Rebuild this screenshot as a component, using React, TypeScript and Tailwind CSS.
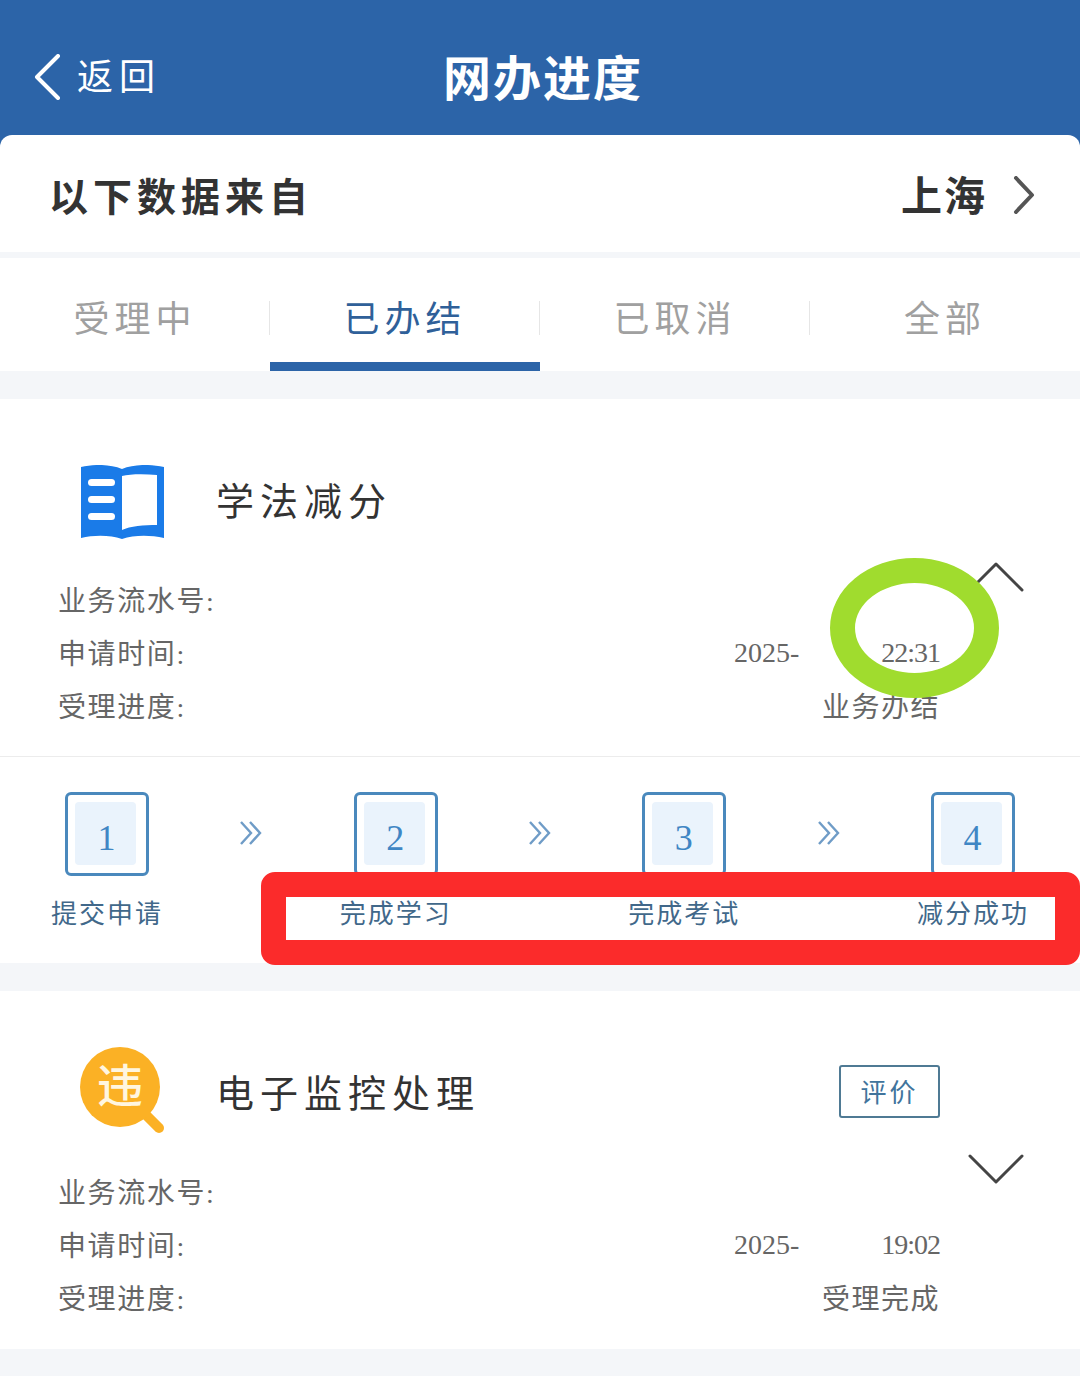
import { ReactNode } from "react";

function BackChevron() {
  return (
    <svg width="28" height="46" viewBox="0 0 28 46" fill="none" className="-mt-[6px] shrink-0">
      <path d="M25 2 L4 23 L25 44" stroke="#fff" strokeWidth="4" strokeLinecap="round" strokeLinejoin="round" />
    </svg>
  );
}

function RightChevron() {
  return (
    <svg width="22" height="38" viewBox="0 0 22 38" fill="none" className="-mt-[6px] shrink-0">
      <path d="M3 2 L19 19 L3 36" stroke="#555" strokeWidth="4" strokeLinecap="round" strokeLinejoin="round" />
    </svg>
  );
}

function BookIcon() {
  return (
    <svg width="85" height="74" viewBox="0 0 85 74" className="shrink-0">
      <path d="M1 2 C14 -1 30 -1 42 4 C54 -1 70 -1 84 2 L84 73 C70 70 54 70 42 74 C30 70 14 70 1 73 Z" fill="#1a7be8" />
      <path d="M42 11 C50 9 64 9 77 10 L77 60 C64 60 50 61 42 65 Z" fill="#fff" />
      <rect x="8" y="14" width="27" height="7" rx="3.5" fill="#fff" />
      <rect x="8" y="31" width="27" height="7" rx="3.5" fill="#fff" />
      <rect x="8" y="48" width="27" height="7" rx="3.5" fill="#fff" />
    </svg>
  );
}

function ViolationIcon() {
  return (
    <div className="relative -mt-[8px] h-[86px] w-[85px] shrink-0">
      <svg width="85" height="86" viewBox="0 0 85 86" className="absolute left-0 top-0">
        <path d="M64 66 L79 81" stroke="#fbb125" strokeWidth="10" strokeLinecap="round" />
        <circle cx="40" cy="40" r="40" fill="#fbb125" />
      </svg>
      <span className="absolute left-[17px] top-[10px] text-[46px] leading-[60px] font-medium text-[#fff6e0]">违</span>
    </div>
  );
}

function Toggle({ up }: { up: boolean }) {
  return (
    <svg width="56" height="32" viewBox="0 0 56 32" fill="none">
      <path
        d={up ? "M2 29 L28 3 L54 29" : "M2 3 L28 29 L54 3"}
        stroke="#444"
        strokeWidth="3"
        strokeLinecap="round"
        strokeLinejoin="round"
      />
    </svg>
  );
}

function DoubleChevron() {
  return (
    <svg width="26" height="26" viewBox="0 0 26 26" fill="none" className="mt-[28px] shrink-0">
      <path d="M3 2 L13 13 L3 24 M12 2 L22 13 L12 24" stroke="#6f9cc7" strokeWidth="2.4" />
    </svg>
  );
}

function InfoRow({ label, children }: { label: string; children: ReactNode }) {
  return (
    <div className="flex h-[53px] items-center justify-between text-[28px] leading-none text-[#666]">
      <span className="tracking-[1.6px]">{label}</span>
      {children}
    </div>
  );
}

function Step({ num, label }: { num: number; label: string }) {
  return (
    <div className="flex w-[110px] flex-col items-center">
      <div className="h-[84px] w-[84px] rounded-[6px] border-[3px] border-[#4a89bd] bg-white pl-[7px] pt-[7px]">
        <div className="flex h-[63px] w-[61px] items-center justify-center rounded-[4px] bg-[#eaf3fc] pl-[2px] pt-[8px] text-[36px] leading-none text-[#3f86c4]">
          {num}
        </div>
      </div>
      <span className="mt-[22px] whitespace-nowrap text-[26px] leading-[34px] tracking-[2px] text-[#41688a]">{label}</span>
    </div>
  );
}

function CardBody({
  icon,
  title,
  action,
  up,
  serial,
  date,
  status,
}: {
  icon: ReactNode;
  title: string;
  action?: ReactNode;
  up: boolean;
  serial: string;
  date: ReactNode;
  status: string;
}) {
  return (
    <div className="flex">
      <div className="flex-1 pb-[22px] pl-[58px]">
        <div className="mb-[30px] mt-[60px] flex h-[86px] items-center pl-[22px]">
          {icon}
          <span className="ml-[51px] text-[38px] leading-none tracking-[6px] text-[#333]">{title}</span>
          {action}
        </div>
        <InfoRow label={serial}>
          <span />
        </InfoRow>
        <InfoRow label="申请时间:">{date}</InfoRow>
        <InfoRow label="受理进度:">
          <span className="tracking-[1.5px]">{status}</span>
        </InfoRow>
      </div>
      <div className="w-[140px] pl-[28px] pt-[162px]">
        <Toggle up={up} />
      </div>
    </div>
  );
}

export default function App() {
  const tabs = ["受理中", "已办结", "已取消", "全部"];

  return (
    <div className="h-[1387px] w-[1080px] overflow-hidden bg-white font-['Liberation_Serif','Noto_Sans_CJK_SC',serif]">
      {/* Header */}
      <div className="grid h-[135px] grid-cols-[1fr_auto_1fr] items-center bg-[#2c64a8] pt-[24px] text-white">
        <div className="flex items-center gap-[16px] pl-[33px]">
          <BackChevron />
          <span className="-mt-[4px] text-[36px] leading-none tracking-[6px]">返回</span>
        </div>
        <span className="ml-[6px] text-[48px] font-bold leading-none tracking-[2px]">网办进度</span>
        <div />
      </div>

      <div className="bg-[#f4f6f9]">
        {/* Region */}
        <div className="bg-[#2c64a8]">
          <div className="flex h-[117px] items-center justify-between rounded-t-[12px] bg-white pl-[49px] pr-[45px] pt-[8px]">
            <span className="text-[39px] font-bold leading-none tracking-[5px] text-[#333]">以下数据来自</span>
            <div className="flex items-center gap-[26px]">
              <span className="text-[41px] font-bold leading-none tracking-[2px] text-[#333]">上海</span>
              <RightChevron />
            </div>
          </div>
        </div>

        {/* Tabs */}
        <div className="mt-[6px] grid h-[113px] grid-cols-4 bg-white">
          {tabs.map((tab, i) => (
            <div key={tab} className="relative flex items-center justify-center pt-[10px]">
              <span
                className={
                  i === 1
                    ? "text-[36px] leading-none tracking-[5px] text-[#2f6099]"
                    : "text-[36px] leading-none tracking-[5px] text-[#a0a0a0]"
                }
              >
                {tab}
              </span>
              {i < 3 && <div className="absolute bottom-[36px] right-0 h-[34px] w-px bg-[#e6e6e6]" />}
              {i === 1 && <div className="absolute bottom-0 left-0 right-0 h-[9px] bg-[#2c64a8]" />}
            </div>
          ))}
        </div>

        {/* 学法减分 */}
        <div className="relative mt-[28px] bg-white">
          <CardBody
            icon={<BookIcon />}
            title="学法减分"
            up
            serial="业务流水号:"
            date={
              <span className="-mt-[3px] flex w-[206px] justify-between">
                <span>2025-</span>
                <span className="tracking-[-1px]">22:31</span>
              </span>
            }
            status="业务办结"
          />

          <div className="flex h-[207px] justify-between border-t border-[#ececec] pl-[52px] pr-[52px] pt-[35px]">
            <Step num={1} label="提交申请" />
            <DoubleChevron />
            <Step num={2} label="完成学习" />
            <DoubleChevron />
            <Step num={3} label="完成考试" />
            <DoubleChevron />
            <Step num={4} label="减分成功" />
          </div>

          {/* Annotations drawn over the screenshot */}
          <div className="absolute left-[830px] top-[159px] h-[140px] w-[169px] rounded-[50%] border-[25px] border-[#a0dc2e]" />
          <div className="absolute left-[261px] right-0 top-[473px] h-[93px] rounded-[14px] border-[25px] border-[#fb2b2b]" />
        </div>

        {/* 电子监控处理 */}
        <div className="mt-[28px] bg-white pb-px">
          <CardBody
            icon={<ViolationIcon />}
            title="电子监控处理"
            action={
              <button className="-mt-[6px] ml-auto flex h-[53px] w-[101px] items-center justify-center rounded-[3px] border-[2px] border-[#4f7a94] pt-[5px] text-[26px] leading-none tracking-[3px] text-[#41749c]">
                评价
              </button>
            }
            up={false}
            serial="业务流水号:"
            date={
              <span className="-mt-[3px] flex w-[206px] justify-between">
                <span>2025-</span>
                <span className="tracking-[-1px]">19:02</span>
              </span>
            }
            status="受理完成"
          />
        </div>

        <div className="h-[27px]" />
      </div>
    </div>
  );
}
